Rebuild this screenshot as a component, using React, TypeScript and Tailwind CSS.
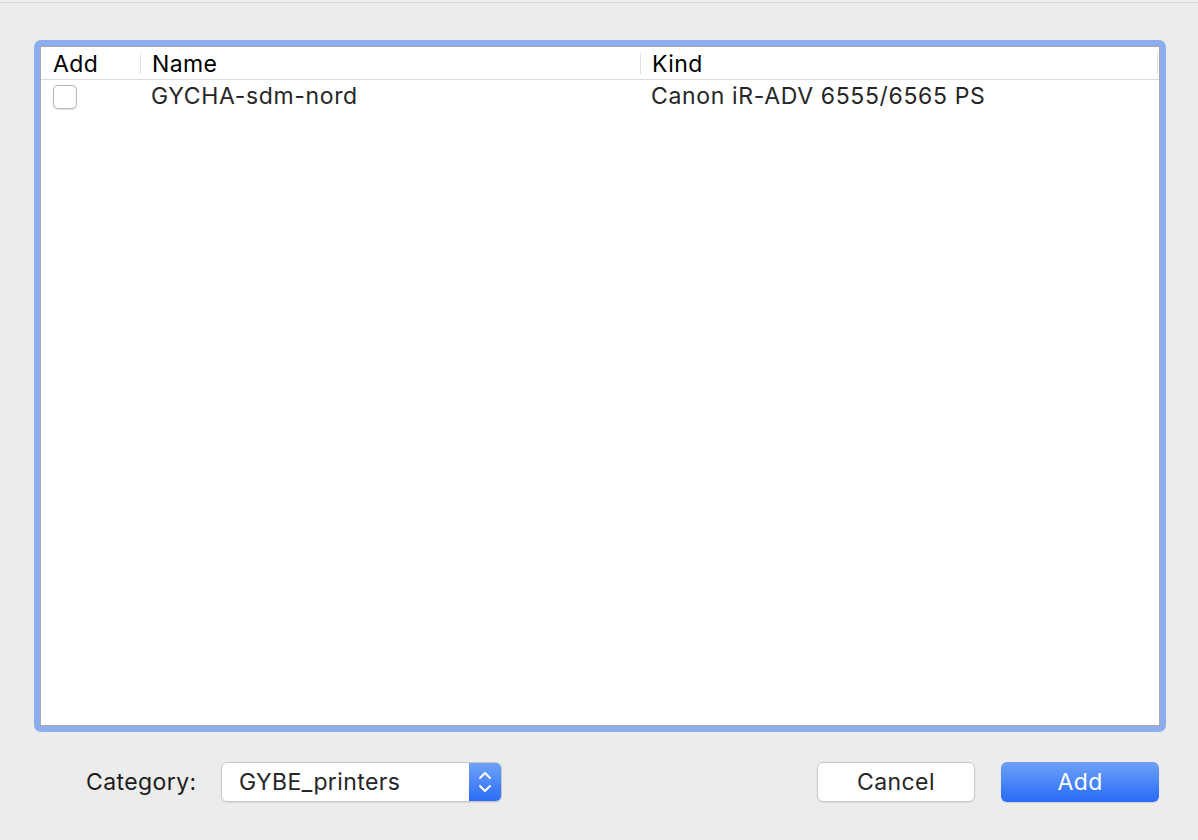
import React from "react";

const font = { fontFamily: "Inter, 'Liberation Sans', sans-serif" };

export default function App() {
  return (
    <div className="w-[1198px] h-[840px] bg-[#ececec] flex flex-col overflow-hidden" style={font}>
      <div className="h-[2px] bg-[#ececec]" />
      <div className="h-[1px] bg-[#d7d7d7]" />
      <div className="ml-[34px] mt-[37px] w-[1132px] h-[692px] rounded-[7px] bg-[#8cadee] p-[6px]">
        <div className="w-full h-full bg-white border border-[#a8a8a8] flex flex-col">
          <div className="h-[33px] border-b border-[#dcdcdc] flex items-center text-[23px] tracking-[0.4px] text-black">
            <div className="w-[99px] h-full flex items-center pl-[12px] pt-[2px]">Add</div>
            <div className="w-[1px] h-[21px] bg-[#e1e1e1]" />
            <div className="w-[499px] h-full flex items-center pl-[11px] pt-[2px]">Name</div>
            <div className="w-[1px] h-[21px] bg-[#e1e1e1]" />
            <div className="flex-1 h-full flex items-center pl-[11px] pt-[2px]">Kind</div>
            <div className="w-[1px] h-[21px] bg-[#e1e1e1] mr-[1px]" />
          </div>
          <div className="h-[33px] flex items-center text-[23px] tracking-[0.65px] text-[#262626]">
            <div className="w-[100px] h-full flex items-center pl-[12px]">
              <div className="w-[24px] h-[24px] rounded-[5px] border border-[#b9b9b9] bg-white shadow-[0_0.5px_1px_rgba(0,0,0,0.12)]" />
            </div>
            <div className="w-[500px] h-full flex items-center pl-[10px]">GYCHA-sdm-nord</div>
            <div className="flex-1 h-full flex items-center pl-[10px]">Canon iR-ADV 6555/6565 PS</div>
          </div>
        </div>
      </div>
      <div className="mt-[30px] flex items-center pl-[86px] pr-[39px] text-[23px] tracking-[0.4px]">
        <div className="text-[#1c1c1c] w-[135px]">Category:</div>
        <div className="w-[281px] h-[40px] rounded-[6px] bg-white border border-[#c9c9c9] shadow-[0_1px_1px_rgba(0,0,0,0.08)] flex items-stretch overflow-hidden">
          <div className="flex-1 flex items-center pl-[17px] text-[#262626]">GYBE_printers</div>
          <div className="w-[32px] bg-gradient-to-b from-[#6fa2f8] to-[#2a6bf6] flex items-center justify-center">
            <svg width="14" height="26" viewBox="0 0 14 26" fill="none" stroke="white" strokeWidth="2" strokeLinecap="round" strokeLinejoin="round">
              <path d="M2 9 L7 4 L12 9" />
              <path d="M2 17 L7 22 L12 17" />
            </svg>
          </div>
        </div>
        <div className="flex-1" />
        <div className="w-[158px] h-[40px] rounded-[6px] bg-white border border-[#c9c9c9] shadow-[0_1px_1px_rgba(0,0,0,0.08)] flex items-center justify-center text-[#262626]">Cancel</div>
        <div className="ml-[26px] w-[158px] h-[40px] rounded-[6px] bg-gradient-to-b from-[#6ea2f8] to-[#2669f6] shadow-[0_1px_1px_rgba(0,0,0,0.12)] flex items-center justify-center text-white">Add</div>
      </div>
    </div>
  );
}
